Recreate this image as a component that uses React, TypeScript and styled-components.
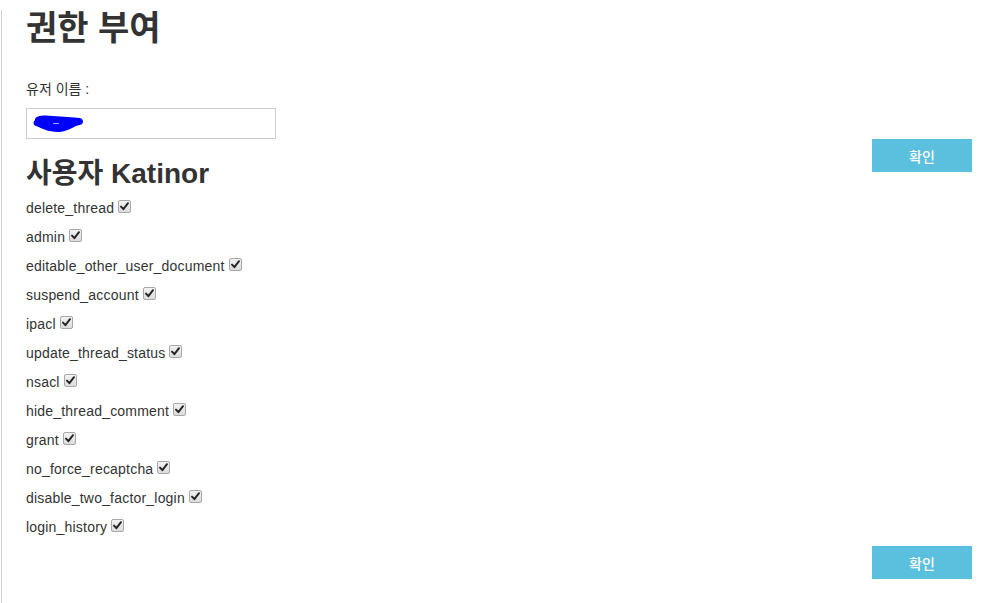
import React from "react";
import styled, { createGlobalStyle } from "styled-components";

const Global = createGlobalStyle`
  html, body { margin: 0; padding: 0; background: #fff; }
  body {
    font-family: "Liberation Sans", "Noto Sans CJK KR", Arial, sans-serif;
    font-size: 14px;
    color: #333;
  }
`;

const Page = styled.div`
  margin-left: 1px;
  border-left: 1px solid #d0d0d0;
  padding: 0 24px 0 24px;
  min-height: 603px;
  box-sizing: border-box;
`;

const Title = styled.h1`
  font-size: 34px;
  line-height: 37px;
  font-weight: 700;
  margin: 10px 0 0;
  color: #333;
`;

const FieldLabel = styled.label`
  display: block;
  line-height: 20px;
  margin-top: 32px;
`;

const Field = styled.div`
  margin-top: 9px;
  width: 250px;
  height: 31px;
  box-sizing: border-box;
  border: 1px solid #ccc;
  display: flex;
  align-items: center;
  padding-left: 6px;
`;

const Button = styled.button`
  width: 100px;
  height: 33px;
  border: none;
  background: #5bc0de;
  color: #fff;
  font-family: "Liberation Sans", "Noto Sans CJK KR", sans-serif;
  font-size: 14px;
  font-weight: 500;
  padding: 0;
  cursor: pointer;
`;

const FloatRight = styled.div`
  float: right;
`;

const ButtonRow = styled.div`
  clear: both;
  display: flex;
  justify-content: flex-end;
`;

const SubTitle = styled.h2`
  font-size: 28px;
  line-height: 33px;
  font-weight: 700;
  margin: 18px 0 0;
  color: #333;
`;

const List = styled.div`
  margin-top: 8px;
  display: flex;
  flex-direction: column;
  gap: 9px;
  padding-bottom: 9px;
`;

const Row = styled.div`
  display: flex;
  align-items: center;
  line-height: 20px;
  height: 20px;
  letter-spacing: 0.2px;
`;

const Box = styled.span`
  display: inline-flex;
  align-items: center;
  justify-content: center;
  width: 11px;
  height: 11px;
  margin-left: 4px;
  margin-top: -3px;
  border: 1px solid #a8a8a8;
  border-radius: 2px;
  background: linear-gradient(#f2f2f2, #dcdcdc);
`;

const perms = [
  "delete_thread",
  "admin",
  "editable_other_user_document",
  "suspend_account",
  "ipacl",
  "update_thread_status",
  "nsacl",
  "hide_thread_comment",
  "grant",
  "no_force_recaptcha",
  "disable_two_factor_login",
  "login_history",
];

const Check = () => (
  <Box>
    <svg width="9" height="9" viewBox="0 0 9 9">
      <path d="M1 4.6 L3.4 7.2 L8 1.2" fill="none" stroke="#222" strokeWidth="1.9" strokeLinecap="round" strokeLinejoin="round" />
    </svg>
  </Box>
);

const Scribble = () => (
  <svg width="52" height="20" viewBox="0 0 52 20">
    <path
      d="M2 6 C2 1 12 1 20 2 C30 3 40 3 47 4 C51 5 51 10 47 11 C40 12 35 18 25 18 C15 18 8 14 3 12 C0 11 0 8 2 6 Z"
      fill="#0000ff"
    />
    <path d="M20 9.5 L26 9.5" stroke="#9999ff" strokeWidth="1" />
  </svg>
);

export default function App() {
  return (
    <>
      <Global />
      <Page>
        <Title>권한 부여</Title>
        <FieldLabel>유저 이름 :</FieldLabel>
        <Field>
          <Scribble />
        </Field>
        <FloatRight>
          <Button>확인</Button>
        </FloatRight>
        <SubTitle>사용자 Katinor</SubTitle>
        <List>
          {perms.map((p) => (
            <Row key={p}>
              {p}
              <Check />
            </Row>
          ))}
        </List>
        <ButtonRow>
          <Button>확인</Button>
        </ButtonRow>
      </Page>
    </>
  );
}
